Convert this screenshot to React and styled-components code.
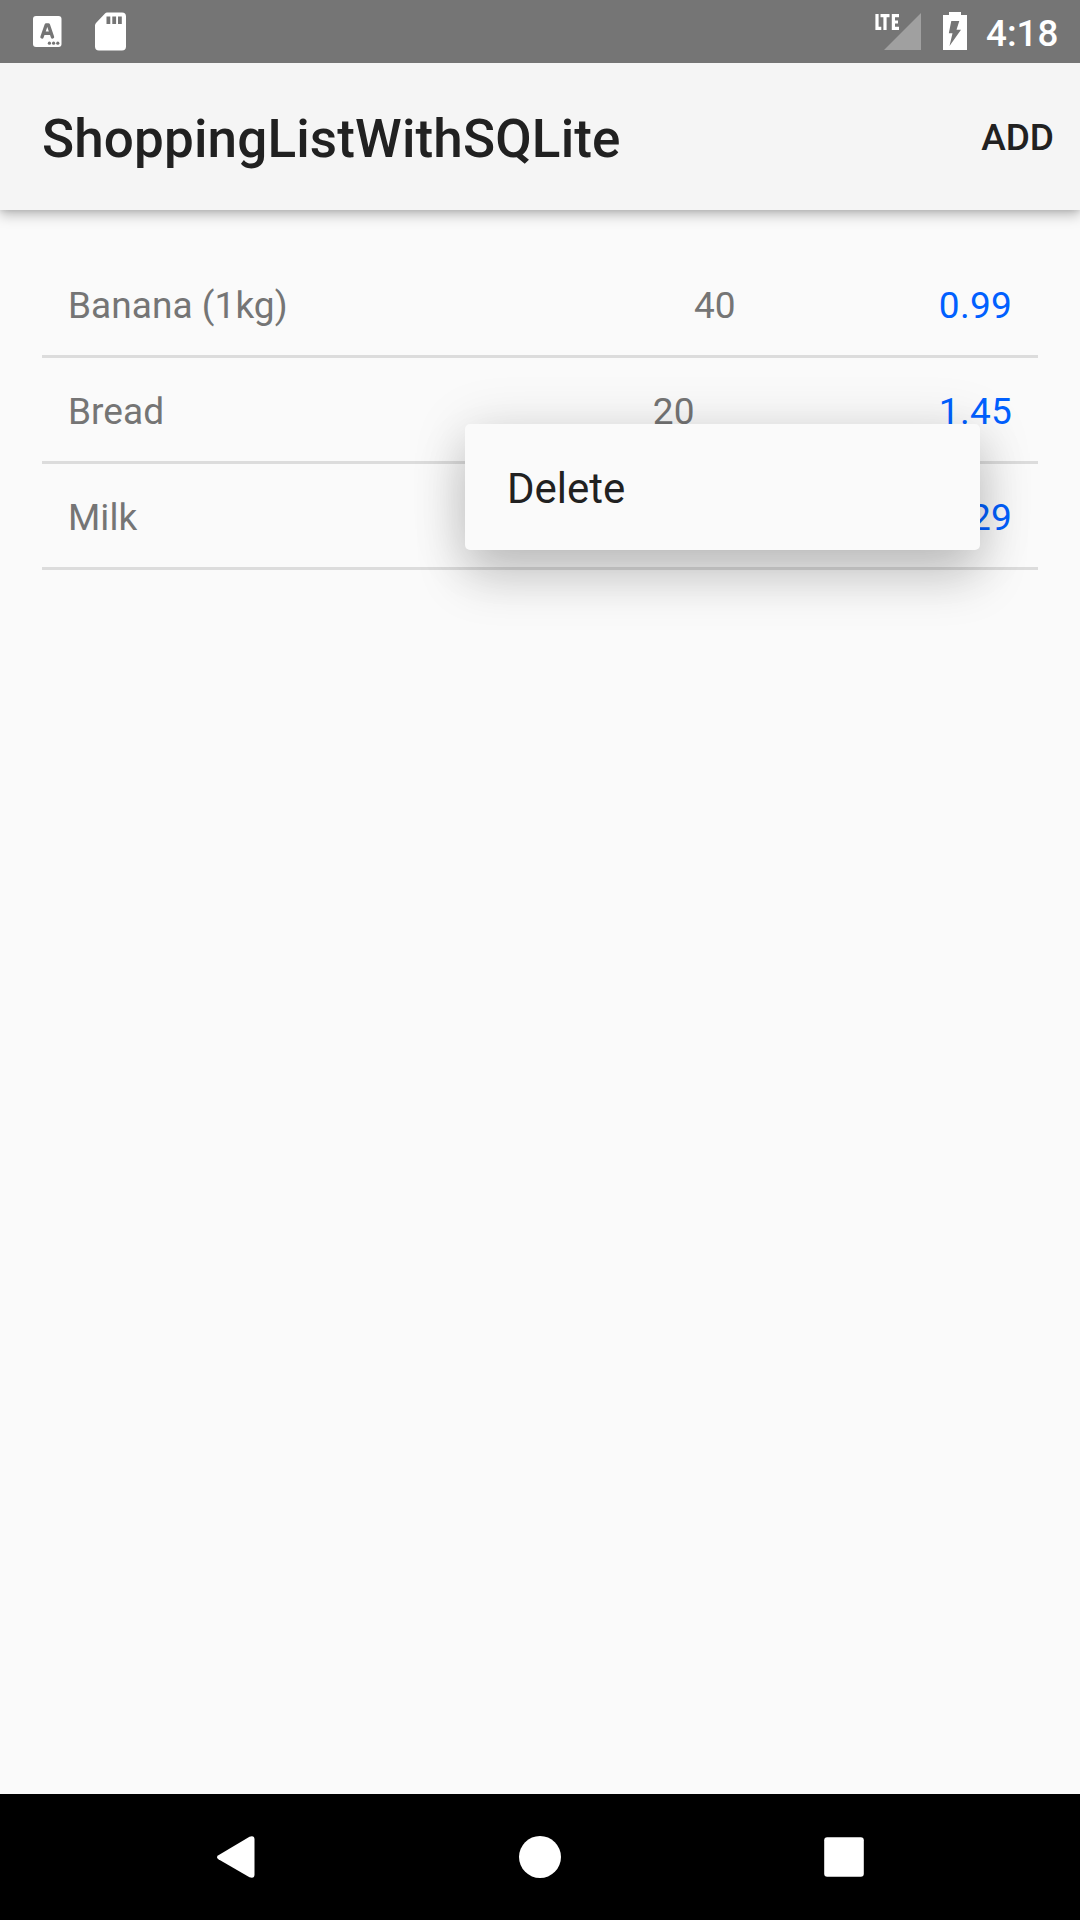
import React from "react";
import styled, { createGlobalStyle } from "styled-components";

const GlobalStyle = createGlobalStyle`
  *, *::before, *::after { box-sizing: border-box; }
  body { margin: 0; background: #fafafa; }
`;

const Screen = styled.div`
  position: relative;
  display: flex;
  flex-direction: column;
  width: 1080px;
  height: 1920px;
  overflow: hidden;
  background: #fafafa;
  color: #212121;
  font-family: Roboto, "Noto Sans", sans-serif;
`;

const StatusBar = styled.header`
  z-index: 1;
  display: flex;
  flex: none;
  align-items: center;
  justify-content: space-between;
  height: 63px;
  background: #757575;
  color: #fff;
`;

const StatusIcons = styled.svg`
  display: block;
`;

const StatusEnd = styled.div`
  display: flex;
  align-items: center;
`;

const Clock = styled.span`
  width: 94px;
  padding-top: 3px;
  font-size: 36.75px;
  font-weight: 500;
  line-height: 43px;
`;

const Toolbar = styled.div`
  display: flex;
  flex: none;
  align-items: center;
  justify-content: space-between;
  height: 147px;
  padding: 0 26px 0 42px;
  background: #f5f5f5;
  box-shadow: 0 5px 12px rgba(0, 0, 0, 0.25), 0 1px 5px rgba(0, 0, 0, 0.1);
`;

const Title = styled.h1`
  margin: 4px 0 0;
  font-size: 53px;
  font-weight: 500;
  line-height: 62px;
  letter-spacing: 0.15px;
`;

const Action = styled.button`
  padding: 2px 0 0;
  border: 0;
  background: none;
  color: inherit;
  font: 500 37px/43px Roboto, "Noto Sans", sans-serif;
`;

const List = styled.ul`
  flex: 1;
  margin: 0;
  padding: 42px 42px 0;
  list-style: none;
`;

const Row = styled.li`
  display: flex;
  align-items: center;
  height: 106px;
  padding: 4px 26px 0;
  border-bottom: 3px solid #dcdcdc;
  font-size: 37px;
  line-height: 43px;
  color: #757575;
`;

const Cell = styled.span`
  flex: ${(p) => p.$grow} 0 auto;
  letter-spacing: ${(p) => (p.$accent ? "0.25px" : "0.05px")};
  color: ${(p) => (p.$accent ? "#0060ff" : "inherit")};
`;

const Menu = styled.div`
  position: absolute;
  top: 424px;
  left: 465px;
  display: flex;
  align-items: center;
  width: 515px;
  height: 126px;
  padding: 3px 42px 0;
  border-radius: 5px;
  background: #fafafa;
  font-size: 42px;
  line-height: 50px;
  box-shadow: 0 28px 50px rgba(0, 0, 0, 0.18), 0 4px 56px rgba(0, 0, 0, 0.13);
`;

const NavBar = styled.nav`
  display: flex;
  flex: none;
  align-items: center;
  justify-content: center;
  gap: 262px;
  height: 126px;
  background: #000;
`;

const NavIcon = styled.svg`
  width: 42px;
  height: 42px;
  fill: #fff;
  overflow: visible;
`;

const items = [
  { name: "Banana (1kg)", quantity: 40, price: "0.99" },
  { name: "Bread", quantity: 20, price: "1.45" },
  { name: "Milk", quantity: 10, price: "1.29" },
];

export default function App() {
  return (
    <Screen>
      <GlobalStyle />
      <StatusBar>
        <StatusIcons width="160" height="63">
          <rect x="33" y="16" width="28.5" height="31" rx="3" fill="#fff" />
          <path d="M42 37 L46.2 25 H48.4 L52.5 37 M44 33.2 H50.8" fill="none" stroke="#757575" strokeWidth="3.4" strokeLinecap="round" strokeLinejoin="round" />
          <g fill="#757575">
            <circle cx="49.4" cy="43.2" r="1.6" />
            <circle cx="53.6" cy="43.2" r="1.6" />
            <circle cx="57.8" cy="43.2" r="1.6" />
          </g>
          <path d="M107 12.5H122a4 4 0 0 1 4 4V46.500a4 4 0 0 1-4 4H99a4 4 0 0 1-4-4V25.500Q95 24 96 23L105 13.500Q106 12.500 107 12.500Z" fill="#fff" />
          <path d="M106.500 16.500h3.800v7.500h-3.800zM112.300 16.500h3.800v7.500h-3.800zM118 16.500h3.800v7.500H118z" fill="#757575" />
        </StatusIcons>
        <StatusEnd>
          <StatusIcons width="118" height="63" viewBox="868 0 118 63">
            <path d="M921 13V50H884Z" fill="#a0a0a0" />
            <path d="M877 14V28.400H881.300M880.500 15.600H889.500M885 15.600V30M899 15.600H893.400V28.400H899M893.400 22H898" fill="none" stroke="#fff" strokeWidth="3.200" />
            <path d="M949 12h12v3h6v35h-24V15h6z" fill="#fff" />
            <path d="M951.300 21h8L956.500 29.800H961L949.500 46L952.500 33.200H948.800Z" fill="#757575" />
          </StatusIcons>
          <Clock>4:18</Clock>
        </StatusEnd>
      </StatusBar>
      <Toolbar>
        <Title>ShoppingListWithSQLite</Title>
        <Action>ADD</Action>
      </Toolbar>
      <List>
        {items.map((item) => (
          <Row key={item.name}>
            <Cell $grow={2}>{item.name}</Cell>
            <Cell $grow={1}>{item.quantity}</Cell>
            <Cell $grow={0} $accent>{item.price}</Cell>
          </Row>
        ))}
      </List>
      <Menu>Delete</Menu>
      <NavBar>
        <NavIcon viewBox="0 0 42 42">
          <path d="M3.400 19.200L34.500 0.700Q39.500 -1 39.500 3.500V38.500Q39.500 43 34.500 41.300L3.400 23.300Q0.500 21.200 3.400 19.200Z" />
        </NavIcon>
        <NavIcon viewBox="0 0 42 42">
          <circle cx="21" cy="21" r="21" />
        </NavIcon>
        <NavIcon viewBox="0 0 42 42">
          <rect x="1.200" y="1.200" width="39.600" height="39.600" rx="3" />
        </NavIcon>
      </NavBar>
    </Screen>
  );
}
